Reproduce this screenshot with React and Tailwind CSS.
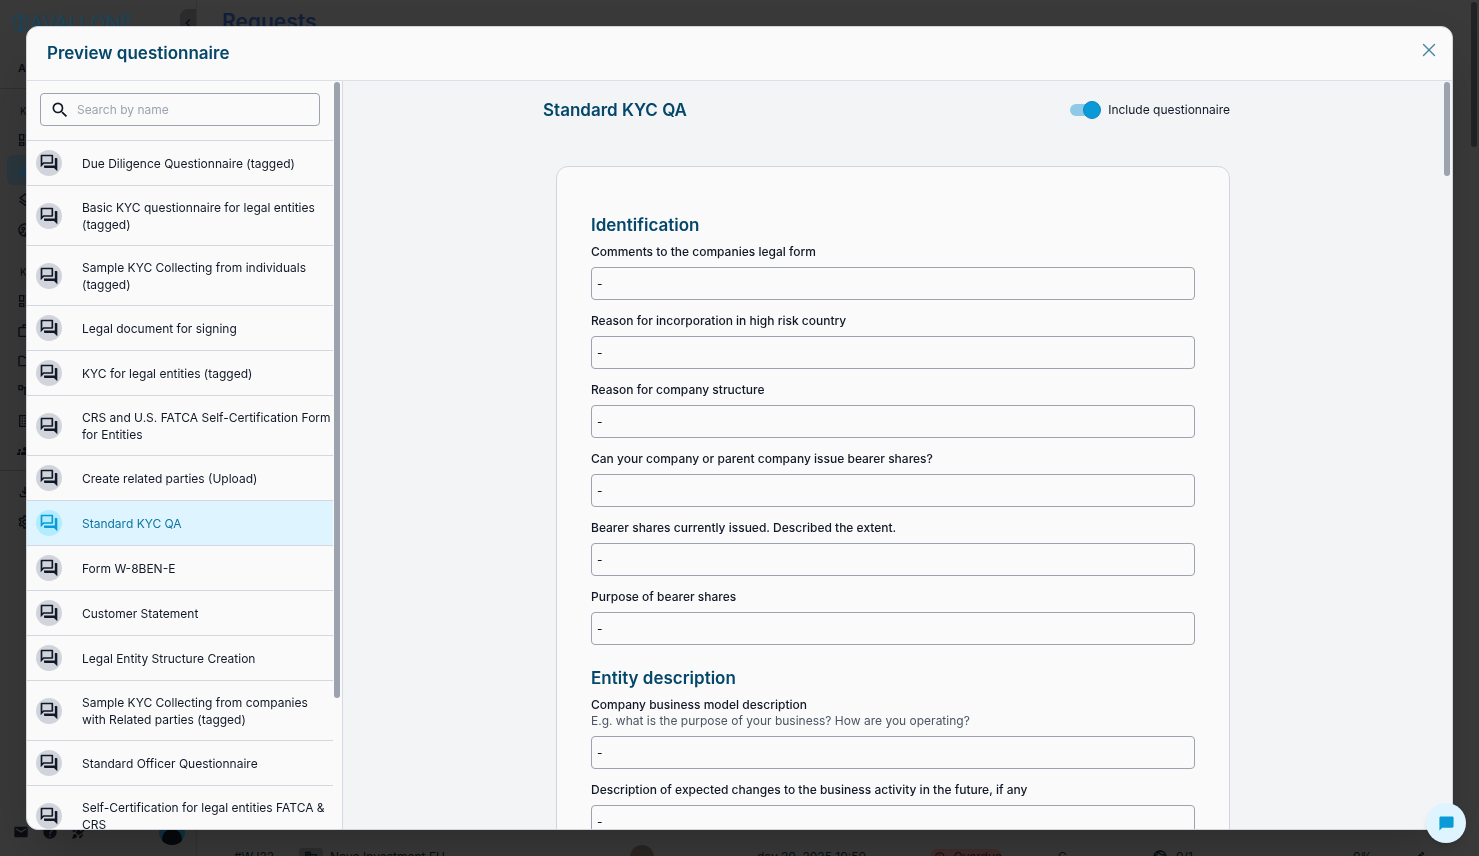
import React from "react";
import {
  MdSearch,
  MdOutlineQuestionAnswer,
  MdChatBubble,
  MdChevronLeft,
  MdOutlineDashboard,
  MdOutlineLayers,
  MdOutlineSupervisedUserCircle,
  MdOutlineWorkOutline,
  MdOutlineFolder,
  MdOutlineAccountTree,
  MdListAlt,
  MdGroups,
  MdOutlineFileDownload,
  MdOutlineSettings,
  MdOutlineRoomService,
  MdMail,
  MdHelp,
  MdRocketLaunch,
  MdEdit,
  MdOutlineFace,
  MdOutlineBusiness,
  MdOutlineSchedule,
} from "react-icons/md";
import { X } from "lucide-react";

const questionnaires = [
  "Due Diligence Questionnaire (tagged)",
  "Basic KYC questionnaire for legal entities (tagged)",
  "Sample KYC Collecting from individuals (tagged)",
  "Legal document for signing",
  "KYC for legal entities (tagged)",
  "CRS and U.S. FATCA Self-Certification Form for Entities",
  "Create related parties (Upload)",
  "Standard KYC QA",
  "Form W-8BEN-E",
  "Customer Statement",
  "Legal Entity Structure Creation",
  "Sample KYC Collecting from companies with Related parties (tagged)",
  "Standard Officer Questionnaire",
  "Self-Certification for legal entities FATCA & CRS",
];

const sections = [
  {
    title: "Identification",
    fields: [
      { label: "Comments to the companies legal form" },
      { label: "Reason for incorporation in high risk country" },
      { label: "Reason for company structure" },
      { label: "Can your company or parent company issue bearer shares?" },
      { label: "Bearer shares currently issued. Described the extent." },
      { label: "Purpose of bearer shares" },
    ],
  },
  {
    title: "Entity description",
    fields: [
      {
        label: "Company business model description",
        hint: "E.g. what is the purpose of your business? How are you operating?",
      },
      { label: "Description of expected changes to the business activity in the future, if any" },
    ],
  },
];

const Logo = () => (
  <div className="flex items-center text-[#194459]">
    <svg viewBox="0 0 18 20" className="h-5 w-[18px]" fill="none" stroke="currentColor" strokeWidth="1.5">
      <path d="M6.5 2.2C5 3 3.5 3.4 1.8 3.5V10c0 4 3 7 7.2 9 4.200-2 7.200-5 7.200-9V3.500c-1.700-.1-3.200-.5-4.700-1.300" />
      <path d="M9 5v12" strokeWidth="2.5" />
      <path d="M9 .5V5M6 6h6" />
    </svg>
    <span className="text-[20px] leading-6">AVALLONE</span>
  </div>
);

const NavGroup = ({ title, icons, activeIndex = -1 }) => (
  <div className="flex flex-col">
    <span className="mb-1 h-5 pl-5 text-[10px] leading-5">{title}</span>
    {icons.map((Icon, i) => (
      <a
        key={i}
        href="#"
        tabIndex={-1}
        className={`ml-[7px] flex h-[30px] items-center rounded-l-md pl-[10px] ${
          i === activeIndex ? "bg-[#2a373d] text-[#123f57]" : ""
        }`}
      >
        <Icon size={16} />
      </a>
    ))}
  </div>
);

const RequestRow = () => (
  <div className="-mb-[17px] grid h-8 grid-cols-[65px_31px_300px_127px_173px_128px_94px_201px_59px_1fr] items-center pl-[37px] text-[12px]">
    <span>#WJ22</span>
    <span className="flex h-[18px] w-6 items-center justify-center rounded-sm bg-[#2c2f2e]">
      <MdOutlineBusiness size={14} />
    </span>
    <span>Novo Investment EU</span>
    <span className="size-6 rounded-full bg-[#2b2624]" />
    <span>day 20, 2025 10:50</span>
    <span className="flex h-4 w-[72px] items-center gap-2 rounded-full bg-[#422c2c] pl-1 text-[#1c0d0d]">
      <MdOutlineSchedule size={12} />
      Overdue
    </span>
    <span>C</span>
    <span className="flex items-center gap-2">
      <MdOutlineFace size={16} />
      0/1
    </span>
    <span>0%</span>
    <MdEdit size={14} />
  </div>
);

const BackgroundPage = () => (
  <div aria-hidden="true" className="flex h-full bg-[#3a3a3a] text-[#0b0d12]">
    <aside className="flex w-[197px] shrink-0 flex-col border-r border-[#333333] bg-[#393939]">
      <div className="flex h-[46px] items-center justify-between pl-3">
        <Logo />
        <span className="flex h-7 w-4 items-center justify-center rounded-tl-lg bg-[#2c2c2c]">
          <MdChevronLeft size={16} />
        </span>
      </div>
      <div className="h-[43px] border-b border-[#2f2f2f] pl-[18px] pt-[14px] text-[11px] font-semibold">Avallone</div>
      <nav className="flex flex-1 flex-col pt-3">
        <NavGroup
          title="KYC"
          activeIndex={1}
          icons={[MdOutlineDashboard, MdOutlineRoomService, MdOutlineLayers, MdOutlineSupervisedUserCircle]}
        />
        <div className="h-[17px]" />
        <NavGroup
          title="KYC"
          icons={[
            MdOutlineDashboard,
            MdOutlineWorkOutline,
            MdOutlineFolder,
            MdOutlineAccountTree,
            MdListAlt,
            MdGroups,
          ]}
        />
        <div className="mt-1 flex flex-col border-t border-[#2f2f2f] pt-[6px]">
          {[MdOutlineFileDownload, MdOutlineSettings].map((Icon, i) => (
            <a key={i} href="#" tabIndex={-1} className="flex h-[30px] items-center pl-[17px]">
              <Icon size={16} />
            </a>
          ))}
        </div>
      </nav>
      <div className="flex h-[48px] items-center gap-[13px] pl-[13px]">
        <MdMail size={16} />
        <MdHelp size={16} />
        <MdRocketLaunch size={16} />
        <span className="ml-auto mr-[11px] flex size-[26px] items-end justify-center overflow-hidden rounded-full bg-[#0e3347]">
          <span className="h-4 w-5 rounded-t-full bg-[#07090d]" />
        </span>
      </div>
    </aside>
    <main className="flex flex-1 flex-col justify-between">
      <h1 className="pl-[25px] pt-[10px] text-[21px] font-semibold leading-6 text-[#121f38]">Requests</h1>
      <RequestRow />
    </main>
    <div className="w-2 pt-[2px]">
      <div className="h-[145px] w-[6px] rounded-full bg-[#212224]" />
    </div>
  </div>
);

const QuestionnaireItem = ({ name, active }) => (
  <li>
    <button
      type="button"
      className={`flex min-h-[45px] w-full items-center border-b border-[#d3d7e0] pl-[9px] text-left text-[12px] leading-[17px] ${
        active ? "bg-[#def4ff] text-[#0e75a3]" : "text-[#111827]"
      }`}
    >
      <span
        className={`flex size-[26px] shrink-0 items-center justify-center rounded-full ${
          active ? "bg-[#b3ecff] text-[#0a9ad8]" : "bg-[#d1d5db]"
        }`}
      >
        <MdOutlineQuestionAnswer size={20} />
      </span>
      <span className="ml-5 pb-3 pt-[13px]">{name}</span>
    </button>
  </li>
);

const Field = ({ id, label, hint }) => (
  <div className="mb-[13px]">
    <label htmlFor={id} className="block text-[12px] font-medium leading-4 text-[#111827]">
      {label}
    </label>
    {hint && <p className="text-[12px] leading-4 text-[#4b5563]">{hint}</p>}
    <input
      id={id}
      type="text"
      defaultValue="-"
      className="mt-[7px] block h-[33px] w-full rounded border border-[#9ca3af] px-[5px] text-[12px] text-[#111827]"
    />
  </div>
);

const App = () => {
  const [included, setIncluded] = React.useState(true);

  return (
    <div className="h-screen overflow-hidden font-['Inter',sans-serif]">
      <BackgroundPage />
      <div className="fixed inset-0 flex p-[26px]">
        <div
          role="dialog"
          aria-label="Preview questionnaire"
          className="flex flex-1 flex-col overflow-hidden rounded-xl border border-[#d1d5db] bg-[#fafafa] shadow-2xl"
        >
          <header className="flex h-[54px] shrink-0 items-start justify-between border-b border-[#dcdfe6] pl-5 pr-3">
            <h2 className="pt-[14px] text-[17px] font-semibold leading-6 text-[#04476a]">Preview questionnaire</h2>
            <button type="button" aria-label="Close" className="pt-3 text-[#4483a3]">
              <X size={22} strokeWidth={1.5} />
            </button>
          </header>
          <div className="flex min-h-0 flex-1">
            <aside className="flex w-[316px] shrink-0 border-r border-[#d6d9e1]">
              <div className="flex-1 overflow-hidden">
                <div className="border-b border-[#d3d7e0] px-[13px] pb-[14px] pt-3">
                  <label className="flex h-[33px] items-center gap-[7px] rounded border border-[#9ca3af] pl-[9px] pr-3">
                    <MdSearch size={20} className="text-[#111827]" />
                    <input
                      type="text"
                      aria-label="Search by name"
                      placeholder="Search by name"
                      className="min-w-0 flex-1 text-[12px] placeholder:text-[#9ca3af]"
                    />
                  </label>
                </div>
                <ul>
                  {questionnaires.map((name) => (
                    <QuestionnaireItem key={name} name={name} active={name === "Standard KYC QA"} />
                  ))}
                </ul>
              </div>
              <div className="w-[9px] pl-px pt-px">
                <div className="h-[616px] w-[6px] rounded-full bg-[#9ca3af]" />
              </div>
            </aside>
            <section className="flex flex-1 overflow-hidden bg-[#f2f4f6]">
              <div className="flex-1">
                <div className="mx-auto max-w-[700px]">
                  <div className="flex h-[85px] justify-between pr-[13px] pt-[17px]">
                    <h3 className="text-[17px] font-semibold leading-6 text-[#04476a]">Standard KYC QA</h3>
                    <label className="flex h-6 items-center gap-[10px] text-[12px] text-[#111827]">
                      <input
                        type="checkbox"
                        role="switch"
                        checked={included}
                        onChange={(e) => setIncluded(e.target.checked)}
                        className="relative h-3 w-7 appearance-none rounded-full bg-[#c3c8cf] before:absolute before:-left-[3px] before:-top-[3px] before:size-[18px] before:rounded-full before:bg-[#6b7280] checked:bg-[#8ecae8] checked:before:left-[13px] checked:before:border checked:before:border-[#0c86bd] checked:before:bg-[#0a9ad8]"
                      />
                      Include questionnaire
                    </label>
                  </div>
                  <div className="mx-[13px] rounded-xl border border-[#d1d5db] bg-[#fafafa] px-[34px] pt-[46px]">
                    {sections.map((section, s) => (
                      <div key={section.title} className="mb-[21px]">
                        <h4 className="mb-[7px] text-[17px] font-semibold leading-6 text-[#04476a]">
                          {section.title}
                        </h4>
                        {section.fields.map((field, i) => (
                          <Field key={field.label} id={`field-${s}-${i}`} {...field} />
                        ))}
                      </div>
                    ))}
                  </div>
                </div>
              </div>
              <div className="w-[9px] pl-px pt-px">
                <div className="h-[94px] w-[6px] rounded-full bg-[#9ca3af]" />
              </div>
            </section>
          </div>
        </div>
      </div>
      <button
        type="button"
        aria-label="Open chat"
        className="fixed bottom-[13px] right-[13px] flex size-10 items-center justify-center rounded-full bg-[#def4ff] text-[#0a9ad8] shadow-md"
      >
        <MdChatBubble size={17} />
      </button>
    </div>
  );
};

export default App;
